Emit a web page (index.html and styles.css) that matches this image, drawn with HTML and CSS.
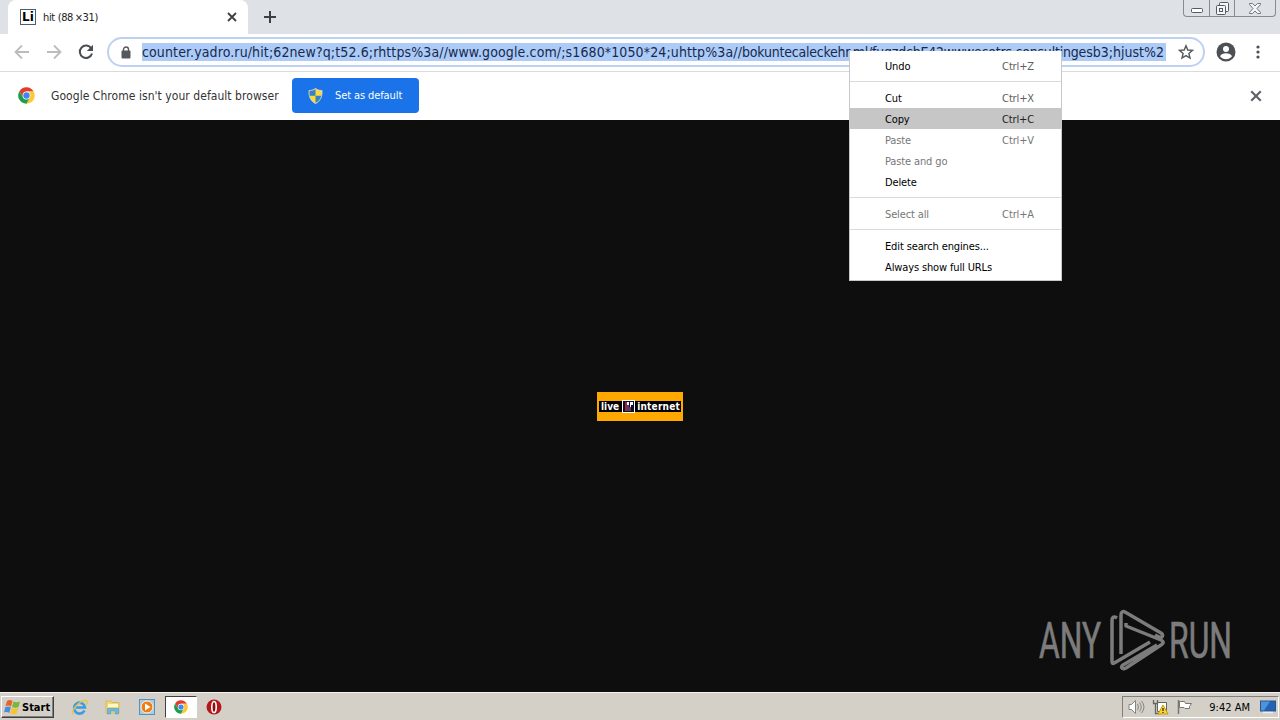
FILE: index.html
```html
<!DOCTYPE html>
<html lang="en">
<head>
    <meta charset="UTF-8">
    <meta name="viewport" content="width=device-width, initial-scale=1.0">
    <title>hit (88×31)</title>
    <link rel="stylesheet" href="styles.css">
</head>
<body>
    <!-- Shared icons -->
    <svg class="defs" width="0" height="0">
        <symbol id="chrome" viewBox="0 0 48 48">
            <path fill="#e33b2e" d="M4 12 14.500 29.500 24 13h20A23 23 0 0 0 4 12z"/>
            <path fill="#fcc934" d="M33.500 29.500 24 47A23 23 0 0 0 44.500 13H24z"/>
            <path fill="#1e9e4a" d="M33.500 29.500 24 47A23 23 0 0 1 4 12l10.500 17.500 9.500 5z"/>
            <circle cx="24" cy="24" r="11" fill="#fff"/>
            <circle cx="24" cy="24" r="9" fill="#4285f4"/>
        </symbol>
        <symbol id="cross" viewBox="0 0 10 10">
            <path d="M1 1l8 8M9 1l-8 8" fill="none" stroke="currentColor" stroke-width="1.800"/>
        </symbol>
    </svg>

    <div class="screen">
        <header class="tab-strip">
            <div class="tab">
                <span class="favicon">Li</span>
                <span class="tab-title">hit (88&thinsp;×31)</span>
                <svg class="tab-close" width="10" height="10"><use href="#cross"/></svg>
            </div>
            <svg class="new-tab" width="12" height="12" viewBox="0 0 12 12"><path d="M6 0v12M0 6h12" stroke="#3c4043" stroke-width="2"/></svg>
            <div class="window-buttons">
                <span class="win-min"><svg width="12" height="5" viewBox="0 0 12 5"><rect x=".5" y=".5" width="11" height="4" rx="1" fill="#fff" stroke="#555b63"/></svg></span>
                <span class="win-restore"><svg width="13" height="13" viewBox="0 0 13 13" fill="#f4f5f7" stroke="#555b63"><rect x="3.500" y=".5" width="9" height="9" rx="1"/><rect x=".5" y="3.500" width="9" height="9" rx="1"/><rect x="3.500" y="6.500" width="3" height="3"/></svg></span>
                <span class="win-close"><svg width="12" height="11" viewBox="0 0 12 11"><path d="M.5.5h3L6 3 8.500.5h3v1L8 5.500l3.500 4v1h-3L6 8l-2.500 2.500h-3v-1L4 5.500.5 1.500z" fill="#f4f5f7" stroke="#555b63" stroke-width=".8"/></svg></span>
            </div>
        </header>

        <div class="toolbar">
            <svg class="nav-icon" width="16" height="16" viewBox="0 0 16 16"><path d="M15 8H2M8 1.500 1.500 8 8 14.500" fill="none" stroke="#babcbe" stroke-width="1.800"/></svg>
            <svg class="nav-icon" width="16" height="16" viewBox="0 0 16 16"><path d="M1 8h13M8 1.500 14.500 8 8 14.500" fill="none" stroke="#babcbe" stroke-width="1.800"/></svg>
            <svg class="nav-icon" width="16" height="16" viewBox="0 0 16 16"><path d="M13.300 4.500A6.200 6.200 0 1 0 14 9.500" fill="none" stroke="#4a4d51" stroke-width="2"/><path d="M15 .8V7H8.800z" fill="#4a4d51"/></svg>
            <div class="omnibox">
                <svg class="lock" width="10" height="13" viewBox="0 0 10 13"><path d="M2.500 6V3.500a2.500 2.500 0 0 1 5 0V6" fill="none" stroke="#55585c" stroke-width="1.400"/><rect x=".5" y="4.500" width="9" height="8" rx="1" fill="#55585c"/></svg>
                <div class="url"><span class="url-wide">counter.yadro.ru/hit;62new?q;t52.6;rhttps%3a//www.google.com/;s1680*1050*24;uhttp%3a//</span><span class="url-tight">bokuntecaleckehr.ml/fuqzdcbE42wwwecotrs.consulting</span>esb3;hjust%2</div>
                <svg class="star" width="16" height="16" viewBox="0 0 16 16"><path d="M8 1.700 9.800 6l4.700.4-3.600 3.100 1.100 4.600L8 11.600l-4 2.500 1.100-4.600L1.500 6.400 6.200 6z" fill="none" stroke="#55585c" stroke-width="1.400"/></svg>
            </div>
            <svg class="avatar" width="20" height="20" viewBox="0 0 20 20"><circle cx="10" cy="10" r="9.500" fill="#4c4f54"/><circle cx="10" cy="7" r="3" fill="#fff"/><path d="M4 14.200c1.500-4 10.500-4 12 0-3 4-9 4-12 0z" fill="#fff"/></svg>
            <svg class="more" width="4" height="16" viewBox="0 0 4 16" fill="#4c4f54"><circle cx="2" cy="3" r="1.600"/><circle cx="2" cy="8" r="1.600"/><circle cx="2" cy="13" r="1.600"/></svg>
        </div>

        <div class="infobar">
            <svg class="info-logo" width="17" height="17"><use href="#chrome"/></svg>
            <span class="info-text">Google Chrome isn't your default browser</span>
            <button class="default-button">
                <svg width="15" height="16" viewBox="0 0 15 16"><path d="M7.500.5c2 1.500 4 2 6.500 2 .3 6-1.500 10.500-6.500 13C2.500 13 .7 8.500 1 2.500c2.500 0 4.500-.5 6.500-2z" fill="#ffd83a" stroke="#c8d4dc"/><path d="M7.500 1.300v6.500H1.600L1.500 3c2.300 0 4.200-.5 6-1.700zM7.500 7.800h5.700c-.7 3.200-2.400 5.500-5.700 7z" fill="#3384c4"/></svg>
                <span>Set as default</span>
            </button>
            <svg class="info-close" width="12" height="12"><use href="#cross"/></svg>
        </div>

        <main class="page">
            <div class="counter">
                <div class="counter-strip">
                    <span class="counter-live">live</span>
                    <svg width="13" height="13" viewBox="0 0 13 13"><rect x=".5" y=".5" width="12" height="12" fill="#10102c" stroke="#fff"/><path d="M3 2h2v9H3z" fill="#a42720"/><path d="M5 5h2v6H5z" fill="#3444a0"/><path d="M7 7h2v4H7z" fill="#8b2e25"/><path d="M5 2h2v3H5zM8 2h3v3H9v2H8z" fill="#fff"/></svg>
                    <span class="counter-net">internet</span>
                </div>
            </div>

            <svg class="watermark" width="204" height="70" viewBox="0 0 204 70">
                <g class="watermark-text">
                    <text x="2" y="50" textLength="62" lengthAdjust="spacingAndGlyphs">ANY</text>
                    <text x="132" y="50" textLength="63" lengthAdjust="spacingAndGlyphs">RUN</text>
                </g>
                <g class="watermark-mark">
                    <path d="M80 10c-3-2-5-1-5 2v41c0 3 1 3 4 1l34-20"/>
                    <path d="M84 46V7c0-3 2-4 4-3l36 21c3 2 1 6-2 4l-4-2"/>
                    <path d="M89 15v3l35 14c3 2 3 3 0 5L89 60c-4 2-6-1-3-3l34-20"/>
                </g>
            </svg>
        </main>

        <footer class="taskbar">
            <div class="start">
                <svg width="17" height="16" viewBox="0 0 17 16"><path d="M3 2c2-1.500 4-1 5.500 0L7 7.500C5.500 6.500 3.500 6 1.500 7z" fill="#e8622c"/><path d="M9.500 2.500c2 1 4 1 6.500 0L14.500 8c-2 1-4.500 1-6.500 0z" fill="#7cb53c"/><path d="M1.300 8c2-1 4-.7 5.500.3L5.300 14C4 13 2 12.700 0 13.500z" fill="#4a8ed8"/><path d="M7.700 9c2 1 4 1 6.500 0l-1.500 5.500c-2 1-4.500 1-6.500 0z" fill="#f6c42c"/></svg>
                <span>Start</span>
            </div>
            <div class="quick-launch">
                <span class="task"><svg width="17" height="17" viewBox="0 0 17 17"><path d="M13.500 11.500A5.500 5.500 0 1 1 14 8.500H5" fill="none" stroke="#3d9be0" stroke-width="2.600"/><path d="M2 15.500C-1 12 9 1 15 1.500c2 .5 1 3 0 4.500" fill="none" stroke="#e8c34a" stroke-width="1.300"/></svg></span>
                <span class="task"><svg width="16" height="16" viewBox="0 0 16 16"><path d="M1 2h5l1 1.500h7V14H1z" fill="#f0d779" stroke="#d8b95a"/><path d="M3 5h10v3H3z" fill="#fff7c8"/><path d="M2.500 15V9.500h11V15h-3v-3h-5v3z" fill="#6db9dd" stroke="#4b9bc6" stroke-width=".6"/></svg></span>
                <span class="task"><svg width="16" height="16" viewBox="0 0 16 16"><rect x=".5" y=".5" width="15" height="15" fill="#a9cce6" stroke="#5792bd"/><circle cx="8" cy="8" r="6" fill="#ee7f16" stroke="#fff2de"/><path d="M6 4.500 11.500 8 6 11.500z" fill="#fff"/></svg></span>
                <span class="task task-active"><svg width="14" height="14"><use href="#chrome"/></svg></span>
                <span class="task"><svg width="16" height="16" viewBox="0 0 16 16"><circle cx="8" cy="8" r="7.500" fill="#b5181c"/><ellipse cx="8" cy="8" rx="2.200" ry="5.500" fill="#8c0d12" stroke="#fff" stroke-width="1.600"/></svg></span>
            </div>
            <div class="tray">
                <svg width="17" height="16" viewBox="0 0 17 16" fill="none" stroke="#85857f"><path d="M1 5.500h2.500l4-4v13l-4-4H1z" fill="#fff"/><path d="M9.500 5q2 3 0 6M11.500 3.500q3.500 4.500 0 9M13.500 2q5 6 0 12"/></svg>
                <svg width="17" height="16" viewBox="0 0 17 16"><path d="M5.500 3.500h9v9h-9z" fill="#fff" stroke="#65655e"/><path d="M1.500 1v3.500h4V1M3.500 4.500v10H7" fill="none" stroke="#65655e" stroke-width="1.300"/><path d="M11 6l5 9H6z" fill="#ffd52b" stroke="#c19c19"/><path d="M11 9v3M11 13v1" stroke="#222" stroke-width="1.200"/></svg>
                <svg width="17" height="16" viewBox="0 0 17 16"><path d="M2.500 1v14" stroke="#77776f" stroke-width="1.500"/><path d="M3.500 2.500h5l1 2h6l-2 3 0 2H9l-1-1H3.500z" fill="#fff" stroke="#77776f"/></svg>
                <span class="clock">9:42 AM</span>
                <svg width="16" height="14" viewBox="0 0 16 14"><rect x=".5" y="1" width="15" height="10" fill="#2462b5" stroke="#2b5489"/><path d="M1 1.500h9L4 10.500H1z" fill="#4b93db"/><path d="M3 12.500h10" stroke="#e8eef4" stroke-width="1.500"/></svg>
            </div>
        </footer>

        <div class="context-menu">
            <div class="menu-item"><span>Undo</span><span class="shortcut">Ctrl+Z</span></div>
            <div class="separator"></div>
            <div class="menu-item"><span>Cut</span><span class="shortcut">Ctrl+X</span></div>
            <div class="menu-item selected"><span>Copy</span><span class="shortcut">Ctrl+C</span></div>
            <div class="menu-item disabled"><span>Paste</span><span class="shortcut">Ctrl+V</span></div>
            <div class="menu-item disabled"><span>Paste and go</span></div>
            <div class="menu-item"><span>Delete</span></div>
            <div class="separator"></div>
            <div class="menu-item disabled"><span>Select all</span><span class="shortcut">Ctrl+A</span></div>
            <div class="separator"></div>
            <div class="menu-item"><span>Edit search engines...</span></div>
            <div class="menu-item"><span>Always show full URLs</span></div>
        </div>
    </div>
</body>
</html>
```
FILE: styles.css
```css
* {
    box-sizing: border-box;
}

body {
    margin: 0;
    font-family: "DejaVu Sans Condensed", "Noto Sans", sans-serif;
    font-size: 11px;
    color: #222;
    overflow: hidden;
}

svg {
    display: block;
    flex: none;
}

.defs {
    position: absolute;
}

.screen {
    position: relative;
    display: flex;
    flex-direction: column;
    width: 1280px;
    height: 720px;
    white-space: nowrap;
}

/* Tabs */
.tab-strip {
    display: flex;
    height: 34px;
    padding-left: 8px;
    background: #dee1e6;
}

.tab {
    display: flex;
    align-items: center;
    width: 240px;
    padding: 0 11px 0 12px;
    background: #fff;
    border-radius: 8px 8px 0 0;
}

.favicon {
    width: 16px;
    height: 16px;
    border: 1px solid #48606e;
    font: bold 12px/14px "DejaVu Sans", sans-serif;
    text-align: center;
    color: #000;
}

.tab-title {
    flex: 1;
    margin-left: 7px;
    letter-spacing: -0.35px;
}

.tab-close {
    color: #3c4043;
}

.new-tab {
    margin: 11px 0 0 16px;
}

.window-buttons {
    display: flex;
    width: 93px;
    height: 17px;
    margin: 0 4px 0 auto;
    border: 1px solid #858a93;
    border-top: 0;
    border-radius: 0 0 4px 4px;
}

.window-buttons span {
    display: flex;
    align-items: center;
    justify-content: center;
}

.win-min {
    width: 25px;
    padding-top: 4px;
}

.win-restore {
    width: 26px;
    border: solid #858a93;
    border-width: 0 1px;
}

.win-close {
    flex: 1;
}

/* Toolbar */
.toolbar {
    display: flex;
    align-items: center;
    height: 38px;
    padding: 0 20px 1px 14px;
    background: #fff;
    border-bottom: 1px solid #d9dbdd;
}

.nav-icon {
    margin-right: 16px;
}

.omnibox {
    display: flex;
    align-items: center;
    width: 1098px;
    height: 30px;
    margin-left: -3px;
    padding: 0 9px 0 12px;
    border: 2px solid #bdd1f2;
    border-radius: 15px;
}

.url {
    width: 1024px;
    height: 18px;
    margin-left: 11px;
    overflow: hidden;
    background: #accbf7;
    color: #17294d;
    font-size: 14px;
    line-height: 18px;
}

.url-wide {
    letter-spacing: 0.12px;
}

.url-tight {
    letter-spacing: -0.22px;
}

.star {
    margin-left: 12px;
}

.avatar {
    margin-left: 11px;
}

.more {
    margin-left: auto;
}

/* Infobar */
.infobar {
    display: flex;
    align-items: center;
    height: 48px;
    padding: 0 18px 1px 18px;
    background: #fff;
}

.info-text {
    width: 229px;
    margin-left: 16px;
    font-size: 12px;
    letter-spacing: 0.05px;
    color: #333;
}

.default-button {
    display: flex;
    align-items: center;
    gap: 12px;
    width: 127px;
    height: 35px;
    margin-left: 12px;
    padding: 0 0 0 16px;
    border: 0;
    border-radius: 4px;
    background: #1a73e8;
    color: #fff;
    font-family: inherit;
    font-size: 11px;
    letter-spacing: -0.1px;
}

.info-close {
    margin-left: auto;
    color: #5f6368;
}

/* Page */
.page {
    position: relative;
    display: flex;
    flex: 1;
    align-items: center;
    justify-content: center;
    background: #0e0e0e;
}

.counter {
    display: flex;
    align-items: center;
    width: 86px;
    height: 29px;
    padding: 1px 2px 0;
    background: #ffa800;
}

.counter-strip {
    display: flex;
    align-items: center;
    justify-content: space-between;
    width: 82px;
    height: 11px;
    padding: 0 1px 0 2px;
    background: #000;
    color: #fff;
    font: bold 10px/11px "DejaVu Sans Condensed", sans-serif;
}

.counter-net {
    letter-spacing: 0.2px;
}

.watermark {
    position: absolute;
    left: 1037px;
    top: 488px;
}

.watermark-text {
    fill: #7c7c7c;
    stroke: #7c7c7c;
    stroke-width: 0.7;
    font-family: "Roboto", sans-serif;
    font-size: 50px;
}

.watermark-mark {
    fill: none;
    stroke: #7c7c7c;
    stroke-width: 3.5;
    stroke-linejoin: round;
}

/* Taskbar */
.taskbar {
    display: flex;
    align-items: center;
    height: 28px;
    padding: 1px 1px 0;
    background: #d4d0c8;
    border-top: 1px solid #f3f1ed;
}

.start {
    display: flex;
    align-items: center;
    gap: 1px;
    width: 53px;
    height: 22px;
    padding-left: 2px;
    border: 1px solid;
    border-color: #fff #404040 #404040 #fff;
    box-shadow: inset -1px -1px #808080;
    font-weight: bold;
    color: #000;
}

.quick-launch {
    display: flex;
    margin-left: 9px;
}

.task {
    display: flex;
    align-items: center;
    justify-content: center;
    width: 32px;
    height: 22px;
    margin-right: 2px;
}

.task-active {
    background: #fff;
    border: 1px solid;
    border-color: #404040 #fff #fff #404040;
}

.task:last-child {
    margin-left: -1px;
}

.tray {
    display: flex;
    align-items: center;
    width: 157px;
    height: 22px;
    margin-left: auto;
    padding: 0 2px 0 5px;
    gap: 7px;
    border: 1px solid;
    border-color: #808080 #fff #fff #808080;
}

.clock {
    margin-left: auto;
    margin-right: 3px;
    color: #000;
}

/* Context menu */
.context-menu {
    position: absolute;
    left: 849px;
    top: 51px;
    width: 213px;
    height: 230px;
    padding-top: 4px;
    background: #fff;
    border: 1px solid #c5c9ce;
    border-top: 0;
    color: #000;
    letter-spacing: -0.13px;
}

.menu-item {
    display: flex;
    align-items: center;
    justify-content: space-between;
    height: 21px;
    padding: 2px 27px 0 35px;
}

.shortcut {
    color: #606060;
}

.selected {
    background: #c6c6c6;
}

.selected .shortcut {
    color: #222;
}

.disabled,
.disabled .shortcut {
    color: #777;
}

.separator {
    height: 1px;
    margin: 5px 0;
    background: #d9dcdd;
}
```
